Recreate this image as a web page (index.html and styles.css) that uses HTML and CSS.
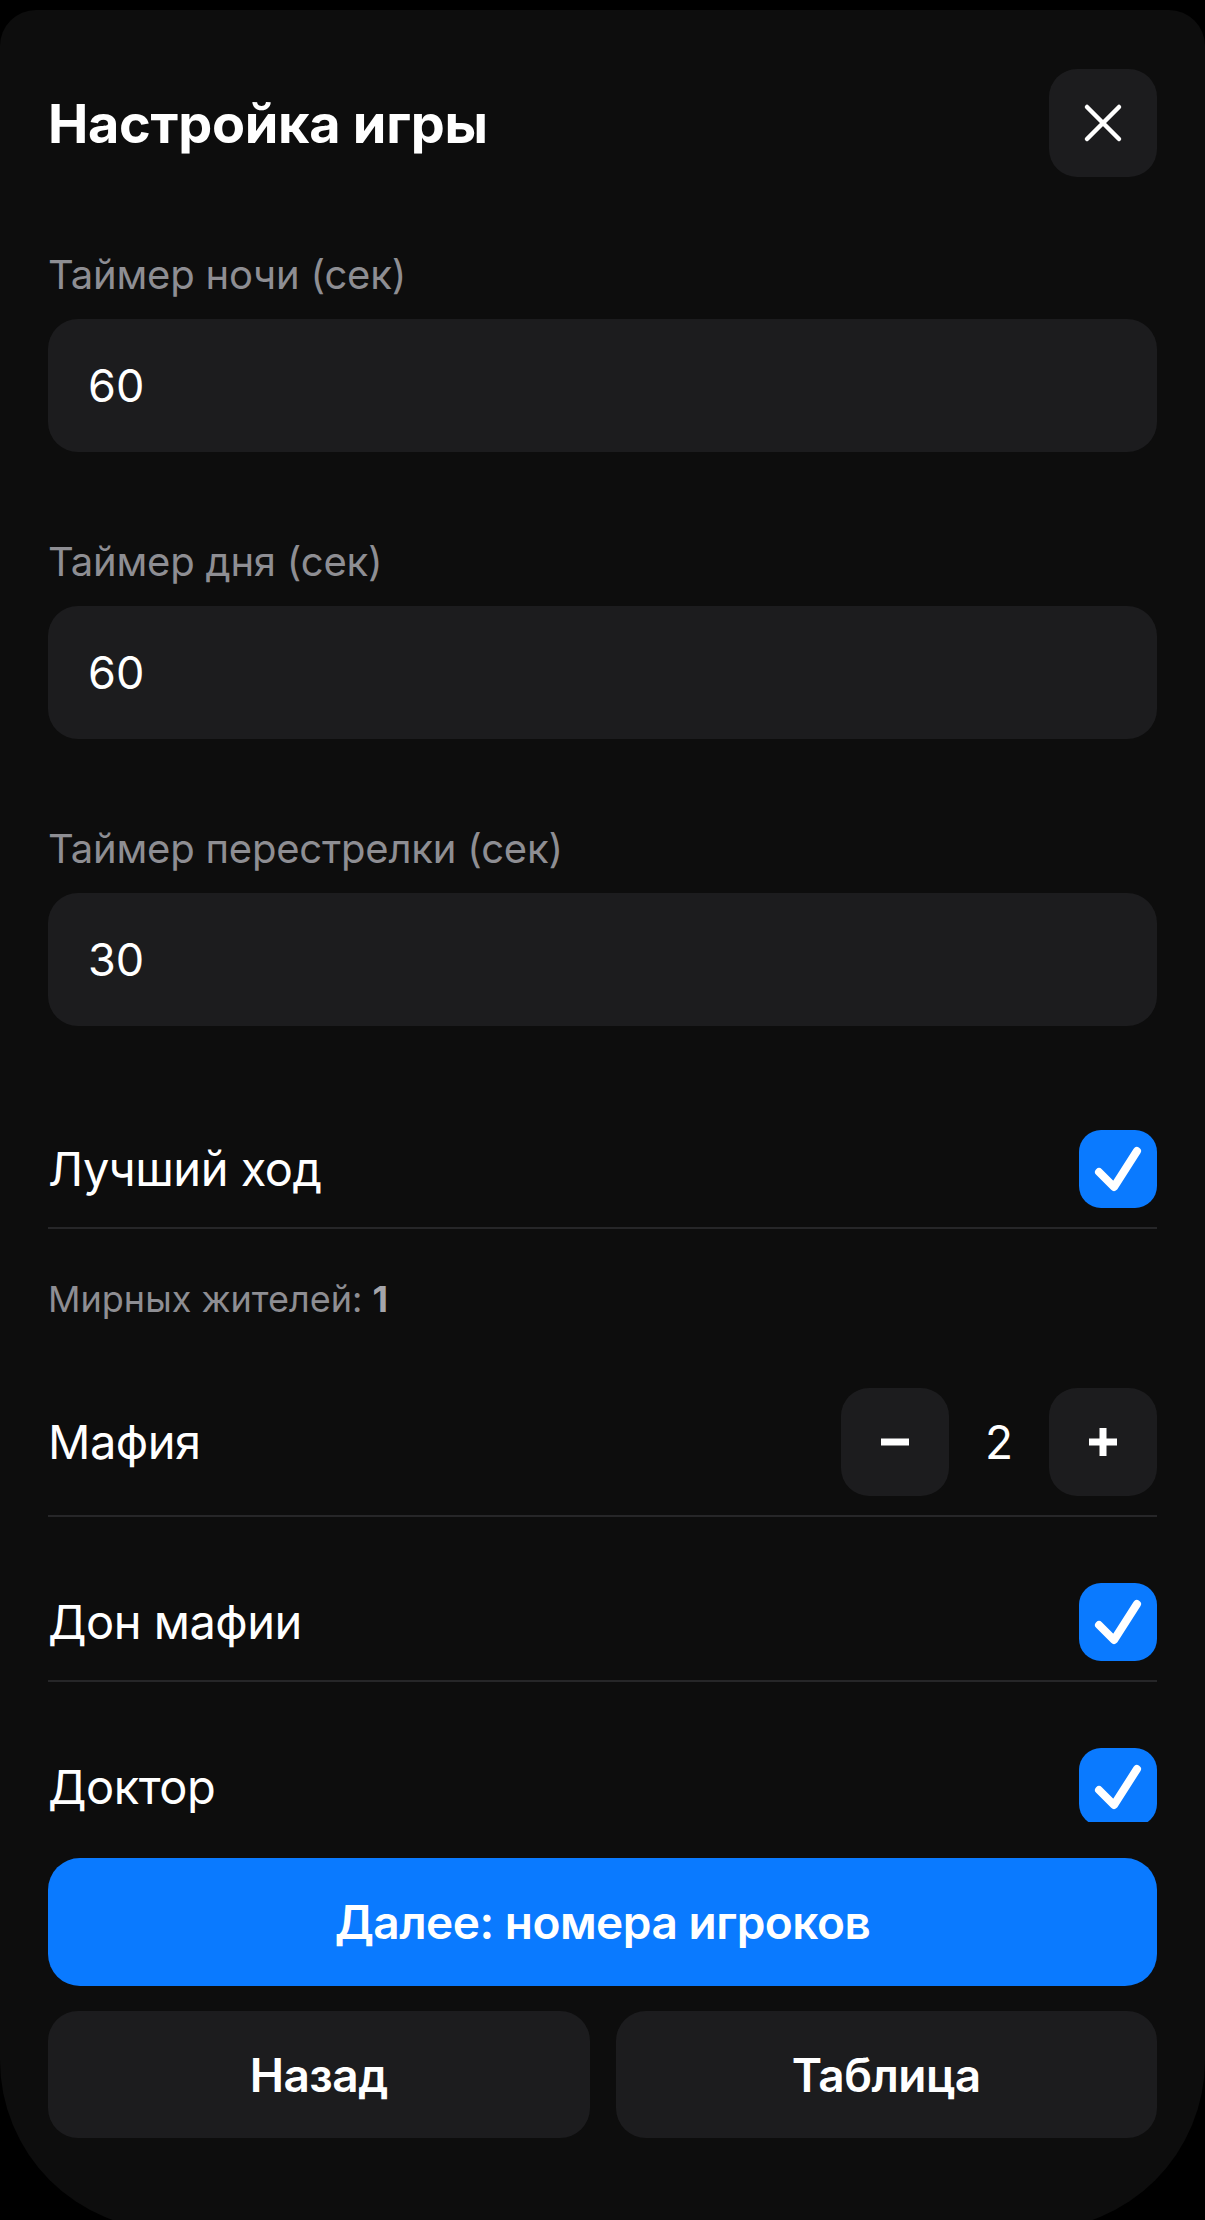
FILE: index.html
```html
<!DOCTYPE html>
<html lang="ru">
<head>
  <meta charset="UTF-8">
  <title>Настройка игры</title>
  <link rel="stylesheet" href="styles.css">
</head>
<body>
  <div class="screen">
    <div class="sheet">
      <div class="header">
        <h1 class="title">Настройка игры</h1>
        <button class="close-btn">
          <svg width="40" height="40" viewBox="0 0 40 40"><path d="M4 4L36 36M36 4L4 36" stroke="#fff" stroke-width="4.5" stroke-linecap="round"/></svg>
        </button>
      </div>

      <div class="content">
        <div class="field">
          <label class="field-label">Таймер ночи (сек)</label>
          <input class="field-input" type="text" value="60">
        </div>
        <div class="field">
          <label class="field-label">Таймер дня (сек)</label>
          <input class="field-input" type="text" value="60">
        </div>
        <div class="field">
          <label class="field-label">Таймер перестрелки (сек)</label>
          <input class="field-input" type="text" value="30">
        </div>

        <div class="row">
          <span class="row-label">Лучший ход</span>
          <span class="check">
            <svg width="78" height="78" viewBox="0 0 78 78"><path d="M20 42L35 57L58 21" fill="none" stroke="#fff" stroke-width="8" stroke-linecap="round" stroke-linejoin="round"/></svg>
          </span>
        </div>

        <div class="note">Мирных жителей: <b>1</b></div>

        <div class="row">
          <span class="row-label">Мафия</span>
          <div class="stepper">
            <button class="step-btn">
              <svg width="32" height="32" viewBox="0 0 32 32"><path d="M2 16H30" stroke="#fff" stroke-width="7"/></svg>
            </button>
            <span class="step-value">2</span>
            <button class="step-btn">
              <svg width="32" height="32" viewBox="0 0 32 32"><path d="M2 16H30M16 2V30" stroke="#fff" stroke-width="7"/></svg>
            </button>
          </div>
        </div>

        <div class="row">
          <span class="row-label">Дон мафии</span>
          <span class="check">
            <svg width="78" height="78" viewBox="0 0 78 78"><path d="M20 42L35 57L58 21" fill="none" stroke="#fff" stroke-width="8" stroke-linecap="round" stroke-linejoin="round"/></svg>
          </span>
        </div>

        <div class="row">
          <span class="row-label">Доктор</span>
          <span class="check">
            <svg width="78" height="78" viewBox="0 0 78 78"><path d="M20 42L35 57L58 21" fill="none" stroke="#fff" stroke-width="8" stroke-linecap="round" stroke-linejoin="round"/></svg>
          </span>
        </div>
      </div>

      <div class="footer">
        <button class="btn-primary">Далее: номера игроков</button>
        <div class="footer-row">
          <button class="btn-secondary">Назад</button>
          <button class="btn-secondary">Таблица</button>
        </div>
      </div>
    </div>
  </div>
</body>
</html>
```

FILE: styles.css
```css
html,
body {
  margin: 0;
  padding: 0;
  background-color: #000;
}

body {
  font-family: Inter, "Noto Sans", sans-serif;
  color: #fff;
}

.screen {
  height: 2220px;
  overflow: hidden;
}

.sheet {
  margin-top: 10px;
  height: 2220px;
  box-sizing: border-box;
  background-color: #0d0d0d;
  border-radius: 36px 36px 170px 170px;
  padding: 0 48px 92px;
  display: flex;
  flex-direction: column;
}

.header {
  display: flex;
  justify-content: space-between;
  align-items: center;
  padding-top: 59px;
}

.title {
  margin: 0;
  font-size: 54px;
  font-weight: 700;
  letter-spacing: -0.3px;
}

button {
  font-family: Inter, "Noto Sans", sans-serif;
  color: #fff;
  border: none;
  padding: 0;
  cursor: pointer;
}

.close-btn {
  width: 108px;
  height: 108px;
  border-radius: 28px;
  background-color: #1c1c1e;
  display: flex;
  align-items: center;
  justify-content: center;
}

.content {
  flex: 1;
  min-height: 0;
  overflow: hidden;
  padding-top: 73px;
}

.field {
  margin-bottom: 85px;
}

.field-label {
  display: block;
  font-size: 40px;
  line-height: 50px;
  color: #8e8e93;
  margin-bottom: 19px;
  letter-spacing: -0.2px;
}

.field-input {
  display: block;
  width: 100%;
  height: 133px;
  box-sizing: border-box;
  border: none;
  border-radius: 30px;
  background-color: #1c1c1e;
  color: #fff;
  font-family: Inter, "Noto Sans", sans-serif;
  font-size: 45px;
  padding: 0 40px;
  outline: none;
}

.row {
  display: flex;
  justify-content: space-between;
  align-items: center;
  padding: 19px 0;
  border-bottom: 2px solid #262628;
}

.row + .row {
  margin-top: 47px;
}

.row-label {
  font-size: 47px;
  line-height: 56px;
  letter-spacing: -0.5px;
}

.check {
  width: 78px;
  height: 78px;
  border-radius: 22px;
  background-color: #0a7aff;
  display: flex;
}

.note {
  font-size: 36px;
  line-height: 48px;
  color: #8e8e93;
  margin: 46px 0;
}

.note b {
  color: #a5a5aa;
}

.stepper {
  display: flex;
  align-items: center;
}

.step-btn {
  width: 108px;
  height: 108px;
  border-radius: 28px;
  background-color: #1c1c1e;
  display: flex;
  align-items: center;
  justify-content: center;
}

.step-value {
  width: 100px;
  text-align: center;
  font-size: 46px;
}

.footer {
  padding-top: 36px;
}

.btn-primary {
  display: block;
  width: 100%;
  height: 128px;
  border-radius: 32px;
  background-color: #0a7aff;
  font-size: 46px;
  font-weight: 600;
  letter-spacing: -0.5px;
}

.footer-row {
  display: grid;
  grid-template-columns: 1fr 1fr;
  gap: 26px;
  margin-top: 25px;
}

.btn-secondary {
  height: 127px;
  border-radius: 30px;
  background-color: #1c1c1e;
  font-size: 46px;
  font-weight: 600;
  letter-spacing: -0.5px;
}
```
